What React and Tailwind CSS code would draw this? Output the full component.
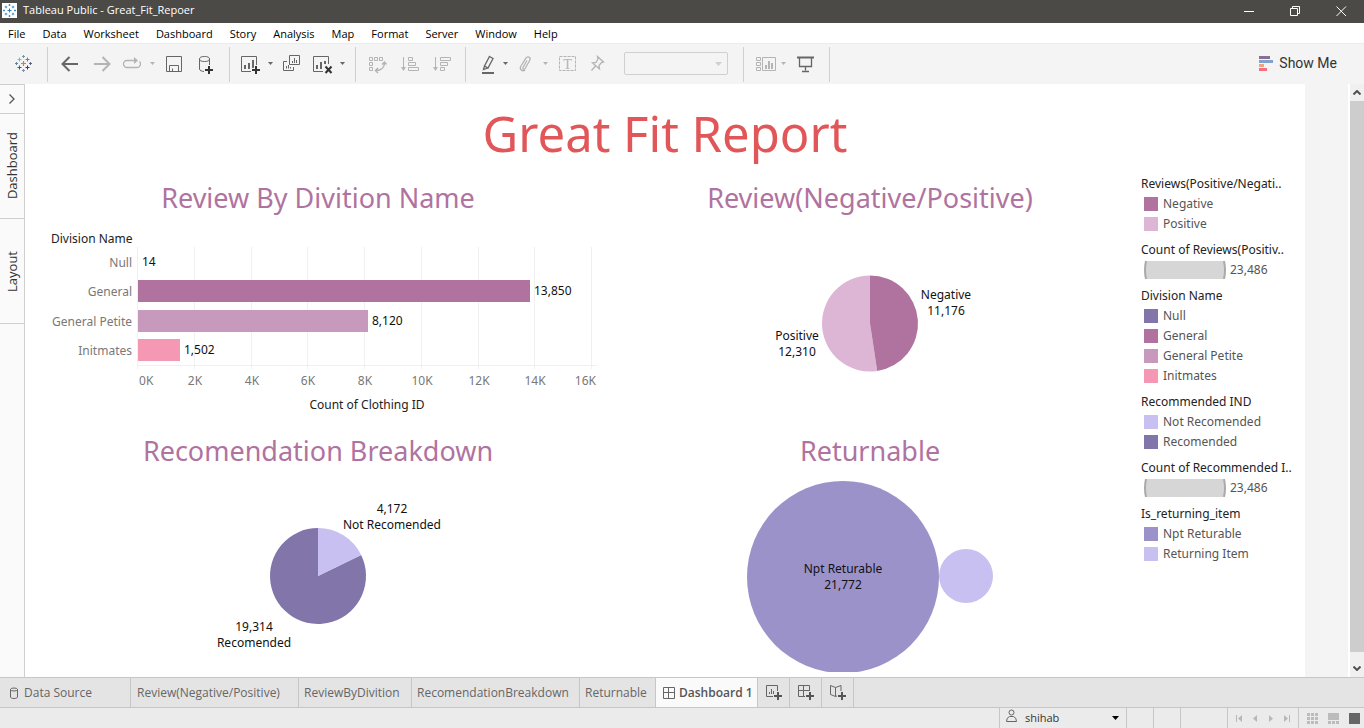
import React from "react";

const UI = "font-['Open_Sans','Noto_Sans',sans-serif]";
const BOOK = "font-['Noto_Sans',sans-serif]";

const menus = ["File", "Data", "Worksheet", "Dashboard", "Story", "Analysis", "Map", "Format", "Server", "Window", "Help"];

const legends = [
  { title: "Reviews(Positive/Negati..", items: [["Negative", "bg-[#b0739f]"], ["Positive", "bg-[#ddb6d5]"]] },
  { title: "Count of Reviews(Positiv..", size: "23,486" },
  {
    title: "Division Name",
    items: [["Null", "bg-[#8175aa]"], ["General", "bg-[#b0739f]"], ["General Petite", "bg-[#c799bc]"], ["Initmates", "bg-[#f598b4]"]],
  },
  { title: "Recommended IND", items: [["Not Recomended", "bg-[#c7c0f0]"], ["Recomended", "bg-[#8175aa]"]] },
  { title: "Count of Recommended I..", size: "23,486" },
  { title: "Is_returning_item", items: [["Npt Returable", "bg-[#9c92ca]"], ["Returning Item", "bg-[#c7c0f0]"]] },
];

const divisions = [
  { name: "Null", value: 14, label: "14", fill: "#8175aa" },
  { name: "General", value: 13850, label: "13,850", fill: "#b0739f" },
  { name: "General Petite", value: 8120, label: "8,120", fill: "#c799bc" },
  { name: "Initmates", value: 1502, label: "1,502", fill: "#f598b4" },
];

function Icon({ color = "#666", children }) {
  return (
    <svg width="20" height="21" viewBox="0 0 20 21" fill="none" stroke={color} className="shrink-0 overflow-visible" aria-hidden="true">
      {children}
    </svg>
  );
}

function Tool({ label, width = "w-8", color, disabled, children }) {
  return (
    <button type="button" aria-label={label} disabled={disabled} className={`flex h-[33px] shrink-0 items-center justify-center ${width}`}>
      <Icon color={color}>{children}</Icon>
    </button>
  );
}

function Caret({ label, width = "w-2.5", color = "#666" }) {
  return (
    <button type="button" aria-label={label} className={`flex h-[33px] shrink-0 items-center justify-center ${width}`}>
      <svg width="5" height="3" viewBox="0 0 5 3" className="shrink-0" aria-hidden="true">
        <path d="M0 0h5L2.5 3z" fill={color} />
      </svg>
    </button>
  );
}

function Plus({ x, y, halo = "#f4f4f4" }) {
  return (
    <>
      <path d={`M${x - 5} ${y}h10M${x} ${y - 5}v10`} stroke={halo} strokeWidth="4" />
      <path d={`M${x - 4} ${y}h8M${x} ${y - 4}v8`} stroke="#333" strokeWidth="2" />
    </>
  );
}

function Cross({ x, y, r, color, w = 1 }) {
  return <path d={`M${x - r} ${y}h${2 * r}M${x} ${y - r}v${2 * r}`} stroke={color} strokeWidth={w} />;
}

function Logo() {
  return (
    <svg width="17" height="17" viewBox="0 0 17 17" fill="none" className="shrink-0" aria-hidden="true">
      <Cross x={8.5} y={8.5} r={2.5} color="#e8762d" w={1.2} />
      <Cross x={4.5} y={4.5} r={2} color="#eb9a3c" />
      <Cross x={12.5} y={4.5} r={2} color="#5b879b" />
      <Cross x={4.5} y={12.5} r={2} color="#c72037" />
      <Cross x={12.5} y={12.5} r={2} color="#1f457e" />
      <Cross x={8.5} y={1.5} r={1.5} color="#7199a6" />
      <Cross x={8.5} y={15.5} r={1.5} color="#8a8ab5" />
      <Cross x={1.5} y={8.5} r={1.5} color="#59879b" />
      <Cross x={15.5} y={8.5} r={1.5} color="#5b6591" />
    </svg>
  );
}

function AppIcon() {
  const blue = "#2a7fb8";
  return (
    <svg width="15" height="15" viewBox="0 0 15 15" fill="none" className="ml-0.5 shrink-0 bg-white" aria-hidden="true">
      <Cross x={7.5} y={7.5} r={2} color={blue} />
      <Cross x={4} y={4} r={1.3} color={blue} w={0.8} />
      <Cross x={11} y={4} r={1.3} color={blue} w={0.8} />
      <Cross x={4} y={11} r={1.3} color={blue} w={0.8} />
      <Cross x={11} y={11} r={1.3} color={blue} w={0.8} />
      <Cross x={7.5} y={2} r={1} color={blue} w={0.8} />
      <Cross x={7.5} y={13} r={1} color={blue} w={0.8} />
      <Cross x={2} y={7.5} r={1} color={blue} w={0.8} />
      <Cross x={13} y={7.5} r={1} color={blue} w={0.8} />
    </svg>
  );
}

function Group({ pad, children }) {
  return <div className={`flex h-[35px] items-start border-r border-[#d0d0d0] ${pad}`}>{children}</div>;
}

function Toolbar() {
  const off = "#b4b4b4";
  return (
    <div className="flex h-[41px] shrink-0 items-start border-t border-[#ececec] bg-[#f4f4f4] pt-[3px]" role="toolbar" aria-label="Toolbar">
      <Group pad="pl-[15px] pr-[15px]">
        <button type="button" aria-label="Start page" className="flex h-[33px] items-center"><Logo /></button>
      </Group>
      <Group pad="pl-1.5 pr-[7px]">
        <Tool label="Undo"><path d="M18 11H3M9.5 4L2.5 11l7 7" strokeWidth="2" /></Tool>
        <Tool label="Redo" color={off} disabled><path d="M2 11h15M10.5 4l7 7-7 7" strokeWidth="2" /></Tool>
        <Tool label="Replay" width="w-7" color={off} disabled>
          <path d="M12.500 7.500H5a3.500 3.500 0 0 0 0 7h10a3.500 3.500 0 0 0 3.500-3.500c0-1-.3-1.800-1-2.500" strokeWidth="1.300" />
          <path d="M12 4v7l4-3.500z" fill={off} stroke="none" />
        </Tool>
        <Caret label="Replay options" width="w-3" color={off} />
        <Tool label="Save">
          <path d="M2.500 3.500h15v15h-15zM5.500 18.500v-6h9v6M8.500 18v-2.500" />
        </Tool>
        <Tool label="New data source">
          <ellipse cx="8.500" cy="6" rx="5" ry="2.500" />
          <path d="M3.500 6v10c0 1.400 2.200 2.500 5 2.500M13.500 6v7" />
          <Plus x={13} y={17} />
        </Tool>
      </Group>
      <Group pad="pl-1 pr-[9px]">
        <Tool label="New worksheet">
          <path d="M1.500 3.500h15v15h-15z" />
          <path d="M5 12v4M9 10v6M13 7v9" strokeWidth="2" />
          <Plus x={16} y={17} />
        </Tool>
        <Caret label="New worksheet options" width="w-2" />
        <Tool label="Duplicate">
          <path d="M9.500 2.500h10v9h-10zM7 8.500H3.500v9h10V14M12.500 8v2M14.500 5v5M16.500 7v3M6.500 13v2.500M8.500 12v3.500M10.500 14v1.500" />
        </Tool>
        <Tool label="Clear sheet">
          <path d="M11 18.500H1.500v-15h15V11" />
          <path d="M5 12v4M9 9v7M13 8v3" strokeWidth="2" />
          <path d="M13.500 13.500l6 6.500M19.500 13.500l-6 6.500" stroke="#333" strokeWidth="2" />
        </Tool>
        <Caret label="Clear options" width="w-2" />
      </Group>
      <Group pad="pl-[5px] pr-2">
        <Tool label="Swap rows and columns" color={off} disabled>
          <path d="M2.500 4.500h3v3h-3zM7.500 4.500h3v3h-3zM12.500 4.500h3v3h-3zM2.500 9.500h3v3h-3zM2.500 14.500h3v3h-3z" />
          <path d="M17.500 9.500c0 4.500-3 8-8.500 8M15 11.500l2.500-2.500 2 2.500M11 15l-2.500 2.500L11 20" strokeWidth="1.500" />
        </Tool>
        <Tool label="Sort ascending" color={off} disabled>
          <path d="M4.500 4v12M9.500 4.500h4v3h-4zM9.500 9.500h7v3h-7zM9.500 14.500h10v3h-10z" />
          <path d="M2 14h5l-2.500 4z" fill={off} stroke="none" />
        </Tool>
        <Tool label="Sort descending" color={off} disabled>
          <path d="M4.500 4v12M9.500 4.500h10v3h-10zM9.500 9.500h7v3h-7zM9.500 14.500h4v3h-4z" />
          <path d="M2 14h5l-2.500 4z" fill={off} stroke="none" />
        </Tool>
      </Group>
      <Group pad="pl-2.5 pr-[15px]">
        <Tool label="Highlight" width="w-6">
          <path d="M11.500 3.500l3.500 2-5 9.500-3.500-2zM6.500 13l-1 3.500L10 15" strokeWidth="1.300" />
          <path d="M4 20h12" strokeWidth="2" />
        </Tool>
        <Caret label="Highlight options" />
        <Tool label="Group members" width="w-[30px]" color={off} disabled>
          <path d="M12 7.500l-4 7c-.8 1.500 1.200 2.600 2 1.200l4.800-8.500c1.400-2.700-2.300-4.800-3.900-2L5.700 13.500c-1.500 3 2 5.500 4.300 3.500" strokeWidth="1.300" />
        </Tool>
        <Caret label="Group options" color={off} />
        <Tool label="Show mark labels" color={off} disabled>
          <path d="M3.500 3.500h16v14h-16z" strokeDasharray="3 1" />
          <text x="11.500" y="15.500" textAnchor="middle" fill={off} stroke="none" className="font-['Liberation_Serif',serif] text-[14px]">T</text>
        </Tool>
        <Tool label="Fix axes" color={off} disabled>
          <path d="M9.500 3.500l6 5.500-2 .500-2.500 3 .500 3.500-7-6 3.500-.500 2-3.500zM7.500 13L3.500 17.500" strokeWidth="1.300" />
        </Tool>
        <div className="relative mt-[5px] ml-2.5 h-[23px] w-[104px]">
          <select aria-label="Fit" disabled className="block h-full w-full appearance-none rounded-[2px] border border-[#d0d0d0] bg-[#f4f4f4] text-xs" />
          <svg width="7" height="4" viewBox="0 0 7 4" className="pointer-events-none absolute top-2.5 right-1.5" aria-hidden="true"><path d="M0 0h7L3.500 4z" fill="#cfcfcf" /></svg>
        </div>
      </Group>
      <Group pad="pl-2.5 pr-[9px]">
        <Tool label="Show or hide cards" width="w-6" color={off} disabled>
          <path d="M.5 4.500h4v3h-4zM.5 9.500h4v3h-4zM.5 14.500h4v3h-4zM6.500 4.500h13v13h-13z" />
          <path d="M10 12v4M13 8v8M16 10v6" strokeWidth="2" />
        </Tool>
        <Caret label="Card options" color={off} />
        <Tool label="Presentation mode">
          <path d="M3 4.500h17" strokeWidth="2" />
          <path d="M5.500 5v8.500h12V5M11.500 13.500v4M8 18.500h7" strokeWidth="1.300" />
        </Tool>
      </Group>
      <button type="button" className="mr-[27px] ml-auto flex h-[33px] items-center gap-1.5 font-['Roboto',sans-serif] text-[14px] font-normal text-[#333]">
        <svg width="14" height="15" viewBox="0 0 14 15" aria-hidden="true">
          <path d="M0 0h11v3H0z" fill="#876f99" /><path d="M0 4h14v3H0z" fill="#7fa3cd" />
          <path d="M0 8h5v3H0z" fill="#f2a37c" /><path d="M0 12h8v3H0z" fill="#f56f80" />
        </svg>
        Show Me
      </button>
    </div>
  );
}

function ChartTitle({ children }) {
  return <h2 className="h-[49px] text-center text-[27px] leading-[47px] whitespace-nowrap text-[#b0739f]">{children}</h2>;
}

function BarChart() {
  const x0 = 96;
  const perK = 28.375;
  const ticks = [0, 2, 4, 6, 8, 10, 12, 14, 16];
  return (
    <svg width="552" height="204" viewBox="0 0 552 204" className="shrink-0 overflow-visible text-[12px]" role="img" aria-label="Count of Clothing ID by Division Name">
      <text x="9" y="20" fill="#222">Division Name</text>
      {ticks.map((t) => {
        const x = Math.round(x0 + t * perK);
        const anchor = t === 0 ? "start" : t === 16 ? "end" : "middle";
        const tx = t === 0 ? x + 1 : t === 16 ? x + 4 : x;
        return (
          <g key={t}>
            <path d={`M${x - 0.5} 24v122`} stroke="#f0f0f0" />
            <text x={tx} y="162" textAnchor={anchor} fill="#787878">{t}K</text>
          </g>
        );
      })}
      <path d="M95 142.500h460" stroke="#f0f0f0" />
      {divisions.map((d, i) => {
        const top = 28 + Math.round(i * 29.5 - 0.1);
        const w = Math.floor((d.value / 1000) * perK);
        return (
          <g key={d.name}>
            <text x="90" y={top + 16} textAnchor="end" fill="#787878">{d.name}</text>
            <rect x={x0} y={top} width={w} height="22" fill={d.fill} />
            <text x={x0 + w + 4} y={top + 15} fill="#111">{d.label}</text>
          </g>
        );
      })}
      <text x="325" y="186" textAnchor="middle" fill="#222">Count of Clothing ID</text>
    </svg>
  );
}

function slice(cx, cy, r, from, to) {
  const p = (f) => `${cx + r * Math.sin(f * 2 * Math.PI)} ${cy - r * Math.cos(f * 2 * Math.PI)}`;
  return `M${cx} ${cy}L${p(from)}A${r} ${r} 0 ${to - from > 0.5 ? 1 : 0} 1 ${p(to)}Z`;
}

function Label({ x, y, lines }) {
  return (
    <text textAnchor="middle" fill="#111">
      {lines.map((l, i) => <tspan key={l} x={x} y={y + i * 16}>{l}</tspan>)}
    </text>
  );
}

function Pie({ cx, cy, share, first, second, label, children }) {
  return (
    <svg width="552" height="204" viewBox="0 0 552 204" className="shrink-0 text-[12px]" role="img" aria-label={label}>
      <path d={slice(cx, cy, 48, share, 1)} fill={second} />
      <path d={slice(cx, cy, 48, 0, share)} fill={first} />
      {children}
    </svg>
  );
}

function Panel({ title, children }) {
  return (
    <section className="flex min-w-0 flex-col items-center">
      <ChartTitle>{title}</ChartTitle>
      {children}
    </section>
  );
}

function Legend({ title, items, size }) {
  return (
    <section className="leading-5 whitespace-nowrap">
      <h3 className="text-[#222]">{title}</h3>
      {items && (
        <ul>
          {items.map(([name, bg]) => (
            <li key={name} className="flex h-5 items-center gap-[5px] pl-[3px] text-[#555]">
              <span className={`size-3.5 ${bg}`} />
              {name}
            </li>
          ))}
        </ul>
      )}
      {size && (
        <div className="flex h-5 items-center gap-1 pl-[3px] text-[#555]">
          <svg width="82" height="18" viewBox="0 0 82 18" aria-hidden="true">
            <path d="M2 0h78q2 9 0 18H2Q0 9 2 0z" fill="#d6d6d6" />
            <path d="M2 0Q0 9 2 18M80 0q2 9 0 18" fill="none" stroke="#aaa" strokeWidth="2" />
          </svg>
          {size}
        </div>
      )}
    </section>
  );
}

function Dashboard() {
  return (
    <main className={`flex min-w-0 flex-1 flex-col overflow-hidden bg-white ${BOOK}`}>
      <h1 className="shrink-0 pt-3.5 pb-1.5 text-center text-[49px] leading-[70px] text-[#e15759]">Great Fit Report</h1>
      <div className="flex pr-3.5 pl-[22px] text-[12px]">
        <div className="grid min-w-0 flex-1 grid-cols-2 gap-x-2.5">
          <Panel title="Review By Divition Name"><BarChart /></Panel>
          <Panel title="Review(Negative/Positive)">
            <Pie cx={276} cy={100.5} share={0.476} first="#b0739f" second="#ddb6d5" label="Negative and positive reviews">
              <Label x={352} y={76} lines={["Negative", "11,176"]} />
              <Label x={203} y={117} lines={["Positive", "12,310"]} />
            </Pie>
          </Panel>
          <Panel title="Recomendation Breakdown">
            <Pie cx={276} cy={100} share={0.1776} first="#c7c0f0" second="#8175aa" label="Recommended and not recommended">
              <Label x={350} y={37} lines={["4,172", "Not Recomended"]} />
              <Label x={212} y={155} lines={["19,314", "Recomended"]} />
            </Pie>
          </Panel>
          <Panel title="Returnable">
            <svg width="552" height="196" viewBox="0 0 552 196" className="shrink-0 text-[12px]" role="img" aria-label="Returnable items">
              <circle cx="249" cy="101" r="96" fill="#9c92ca" />
              <circle cx="372" cy="100" r="27" fill="#c7c0f0" />
              <Label x={249} y={97} lines={["Npt Returable", "21,772"]} />
            </svg>
          </Panel>
        </div>
        <aside className="flex w-[150px] shrink-0 flex-col gap-1.5" aria-label="Legends">
          {legends.map((l) => <Legend key={l.title} {...l} />)}
        </aside>
      </div>
    </main>
  );
}

function SheetTabs() {
  const tab = "flex items-center border-r border-[#c6c6c6]";
  const g = "#666";
  return (
    <nav className={`flex h-[31px] shrink-0 border-y border-[#c6c6c6] bg-[#e4e4e4] text-[12px] text-[#666] ${UI}`} aria-label="Sheets">
      <button type="button" className={`${tab} w-[131px] gap-[5px] pl-[9px]`}>
        <svg width="10" height="12" viewBox="0 0 10 12" fill="none" stroke={g} aria-hidden="true"><path d="M1.500 2.500v7.500c0 .8 1.500 1.500 3.500 1.500s3.500-.7 3.500-1.500V2.500" /><ellipse cx="5" cy="2.500" rx="3.500" ry="1.500" /></svg>
        Data Source
      </button>
      <button type="button" className={`${tab} w-[168px] pl-1.5`}>Review(Negative/Positive)</button>
      <button type="button" className={`${tab} w-[113px] pl-[5px]`}>ReviewByDivition</button>
      <button type="button" className={`${tab} w-[168px] pl-[5px]`}>RecomendationBreakdown</button>
      <button type="button" className={`${tab} w-[76px] pl-[5px]`}>Returnable</button>
      <button type="button" aria-current="page" className={`${tab} w-[102px] gap-1 bg-[#fafafa] pl-[7px] font-semibold whitespace-nowrap text-[#555]`}>
        <svg width="12" height="12" viewBox="0 0 12 12" fill="none" stroke={g} className="shrink-0" aria-hidden="true"><path d="M.5.5h11v11H.5zM5.500.5v11M.5 5.500h11" /></svg>
        Dashboard 1
      </button>
      {[
        ["New worksheet", "M.5.5h11v11H.5zM3.500 7v2M5.500 4v5M7.500 6v3"],
        ["New dashboard", "M.5.5h11v11H.5zM5.500.5v11M.5 5.500h11"],
        ["New story", "M.5.5l5 2 5.500-2v9l-5.500 2-5-2zM5.500 2.500v9"],
      ].map(([label, d]) => (
        <button key={label} type="button" aria-label={label} className={`${tab} w-8 justify-center`}>
          <svg width="16" height="15" viewBox="0 0 16 15" fill="none" stroke={g} aria-hidden="true">
            <path d={d} />
            <path d="M7 11h9M12 6v9" stroke="#e4e4e4" strokeWidth="4" />
            <path d="M8 11h8M12 7v8" stroke="#555" strokeWidth="2" />
          </svg>
        </button>
      ))}
    </nav>
  );
}

function StatusBar() {
  const cell = "border-l border-[#c6c6c6]";
  return (
    <footer className={`flex h-5 shrink-0 justify-end bg-[#ebebeb] text-[11px] text-[#333] ${UI}`}>
      <button type="button" className={`${cell} flex w-[127px] items-center pr-[7px] pl-1.5`}>
        <svg width="11" height="14" viewBox="0 0 11 14" fill="none" stroke="#666" className="mb-1" aria-hidden="true"><circle cx="5.500" cy="3.500" r="2.500" /><path d="M3.500 7.500h4q3 1 3 5h-10q0-4 3-5z" /></svg>
        <span className="ml-2 leading-5">shihab</span>
        <svg width="7" height="4" viewBox="0 0 7 4" className="ml-auto" aria-hidden="true"><path d="M0 0h7L3.500 4z" fill="#000" /></svg>
      </button>
      <div className={`${cell} w-[27px]`} />
      <div className={`${cell} w-[27px]`} />
      <div className={`${cell} w-[47px]`} />
      <div className={`${cell} flex w-[71px] items-center justify-between px-2`}>
        {[
          ["First sheet", "M0 0h1v7H0zM6 0v7L2 3.500z"],
          ["Previous sheet", "M5 0v7L1 3.500z"],
          ["Next sheet", "M2 0v7l4-3.500z"],
          ["Last sheet", "M6 0h1v7H6zM1 0v7l4-3.500z"],
        ].map(([label, d]) => (
          <button key={label} type="button" aria-label={label}>
            <svg width="7" height="7" viewBox="0 0 7 7" fill="#b8b8b8" aria-hidden="true"><path d={d} /></svg>
          </button>
        ))}
      </div>
      <div className={`${cell} flex w-[66px] items-center justify-between pr-1 pl-2`}>
        <button type="button" aria-label="Sheet sorter">
          <svg width="11" height="11" viewBox="0 0 11 11" fill="#bcbcbc" aria-hidden="true"><path d="M0 0h3v3H0zM4 0h3v3H4zM8 0h3v3H8zM0 4h3v3H0zM4 4h3v3H4zM8 4h3v3H8zM0 8h3v3H0zM4 8h3v3H4zM8 8h3v3H8z" /></svg>
        </button>
        <button type="button" aria-label="Filmstrip">
          <svg width="11" height="11" viewBox="0 0 11 11" fill="#bcbcbc" aria-hidden="true"><path d="M0 0h11v7H0zM0 8h3v3H0zM4 8h3v3H4zM8 8h3v3H8z" /></svg>
        </button>
        <button type="button" aria-label="Single sheet"><span className="block size-[11px] bg-[#666]" /></button>
      </div>
    </footer>
  );
}

export default function App() {
  return (
    <div className="flex h-screen flex-col overflow-hidden bg-[#f4f4f4]">
      <header className={`flex h-[23px] shrink-0 items-center bg-[#4b4a47] pb-0.5 text-[11px] text-white ${UI}`}>
        <AppIcon />
        <span className="ml-1.5">Tableau Public - Great_Fit_Repoer</span>
        <div className="ml-auto flex">
          {[
            ["Minimize", "M0 5.500h10"],
            ["Restore", "M.5 2.500h7v7h-7zM2.500 2.500v-2h7v7h-2"],
            ["Close", "M.5.5l9.500 9.500M10 .5L.5 10"],
          ].map(([label, d]) => (
            <button key={label} type="button" aria-label={label} className="flex h-[21px] w-[46px] items-center justify-center">
              <svg width="10" height="10" viewBox="0 0 10 10" fill="none" stroke="#fff" className="overflow-visible" aria-hidden="true"><path d={d} /></svg>
            </button>
          ))}
        </div>
      </header>
      <nav className={`flex h-5 shrink-0 items-center gap-px bg-white pt-0.5 text-[11px] text-black ${UI}`} aria-label="Menu">
        {menus.map((m) => <button key={m} type="button" className="px-2">{m}</button>)}
      </nav>
      <Toolbar />
      <div className="flex min-h-0 flex-1">
        <aside className={`flex w-[25px] shrink-0 flex-col border-t border-r border-[#cfcfcf] bg-[#fafafa] text-[13px] text-[#333] ${UI}`}>
          <button type="button" aria-label="Expand pane" className="flex h-[29px] items-center justify-center border-b border-[#cfcfcf]">
            <svg width="6" height="10" viewBox="0 0 6 10" fill="none" stroke="#555" strokeWidth="1.300" aria-hidden="true"><path d="M.5.5L5 5 .5 9.500" /></svg>
          </button>
          {["Dashboard", "Layout"].map((t) => (
            <button key={t} type="button" className="flex h-[105px] items-center justify-center border-b border-[#cfcfcf]">
              <span className="rotate-180 leading-6 [writing-mode:vertical-rl]">{t}</span>
            </button>
          ))}
        </aside>
        <Dashboard />
        <div className="w-11 shrink-0 border-r border-white" />
        <div className="flex w-[15px] shrink-0 flex-col border-l border-white bg-[#f0f0f0]">
          <button type="button" aria-label="Scroll up" className="flex h-[17px] items-center justify-center">
            <svg width="8" height="5" viewBox="0 0 8 5" fill="none" stroke="#505050" strokeWidth="2" aria-hidden="true"><path d="M.5 4.500L4 1l3.500 3.500" /></svg>
          </button>
          <div className="flex-1 bg-[#cdcdcd]" />
          <button type="button" aria-label="Scroll down" className="mt-2 flex h-[17px] items-center justify-center">
            <svg width="8" height="5" viewBox="0 0 8 5" fill="none" stroke="#505050" strokeWidth="2" aria-hidden="true"><path d="M.5.5L4 4 7.500.5" /></svg>
          </button>
        </div>
      </div>
      <SheetTabs />
      <StatusBar />
    </div>
  );
}
